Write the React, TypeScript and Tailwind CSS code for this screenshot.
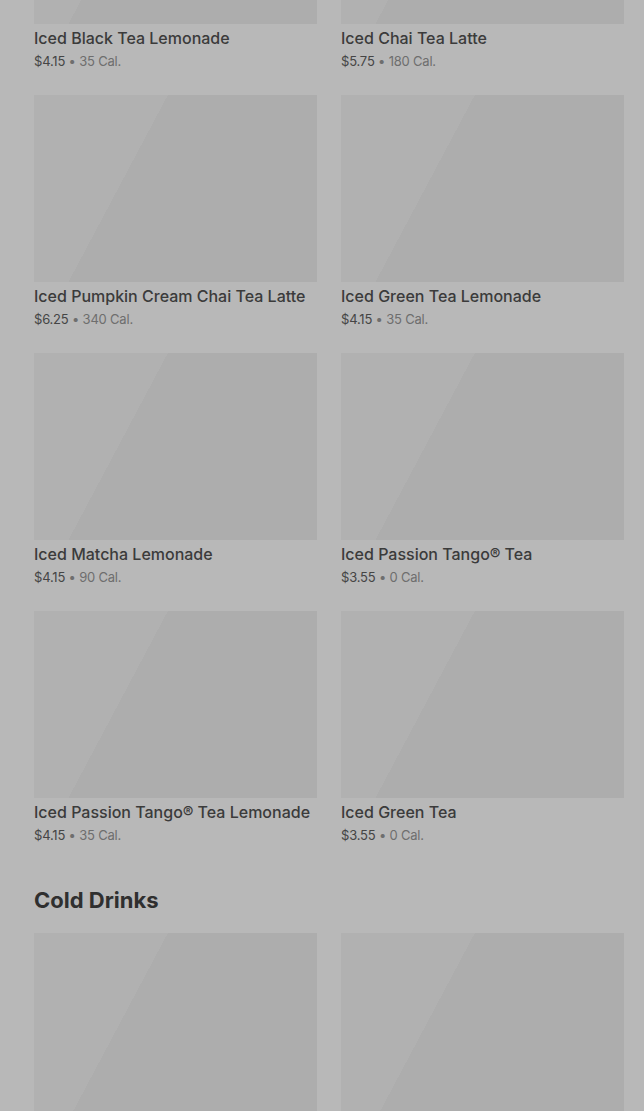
import React from 'react'

interface Item {
  name: string
  price: string
  cal: string
}

const teas: Item[] = [
  { name: 'Iced Black Tea Lemonade', price: '$4.15', cal: '35 Cal.' },
  { name: 'Iced Chai Tea Latte', price: '$5.75', cal: '180 Cal.' },
  { name: 'Iced Pumpkin Cream Chai Tea Latte', price: '$6.25', cal: '340 Cal.' },
  { name: 'Iced Green Tea Lemonade', price: '$4.15', cal: '35 Cal.' },
  { name: 'Iced Matcha Lemonade', price: '$4.15', cal: '90 Cal.' },
  { name: 'Iced Passion Tango® Tea', price: '$3.55', cal: '0 Cal.' },
  { name: 'Iced Passion Tango® Tea Lemonade', price: '$4.15', cal: '35 Cal.' },
  { name: 'Iced Green Tea', price: '$3.55', cal: '0 Cal.' },
]

function Placeholder() {
  // skeleton image – the shimmer band was caught mid-sweep
  return (
    <div className="h-[187px] w-full bg-[linear-gradient(118deg,#b1b1b1_35%,#adadad_35%)]" />
  )
}

function ProductCard({ item }: { item: Item }) {
  return (
    <div className="flex flex-col">
      <Placeholder />
      <p className="mt-1 h-5 text-[16px] leading-5 font-medium text-[#3b3b3b] whitespace-nowrap">
        {item.name}
      </p>
      <p className="mt-1 h-[18px] text-[13px] leading-[18px] tracking-[-0.2px]">
        <span className="text-[#454545]">{item.price}</span>
        <span className="text-[#6e6e6e]"> • {item.cal}</span>
      </p>
    </div>
  )
}

export default function App() {
  return (
    <div
      className="h-[1111px] w-full overflow-hidden bg-[#b8b8b8] pl-[34px] pr-[20px]"
      style={{ fontFamily: 'Inter, "Noto Sans", sans-serif' }}
    >
      <div className="-mt-[163px] grid grid-cols-2 gap-x-6 gap-y-[25px]">
        {teas.map(t => (
          <ProductCard key={t.name} item={t} />
        ))}
      </div>

      <h2 className="mt-[42px] h-7 text-[22px] leading-7 font-bold text-[#2f2f2f]">
        Cold Drinks
      </h2>

      {/* cold drinks still loading – only the image skeletons are in view */}
      <div className="mt-[19px] grid grid-cols-2 gap-x-6">
        <Placeholder />
        <Placeholder />
      </div>
    </div>
  )
}
